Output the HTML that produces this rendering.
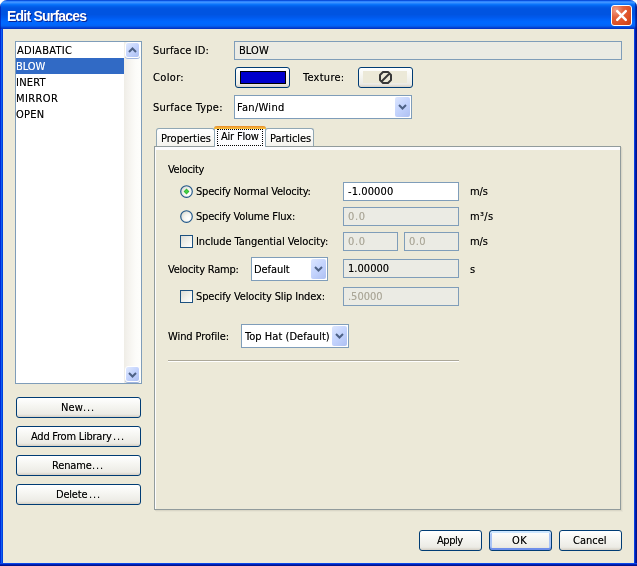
<!DOCTYPE html>
<html>
<head>
<meta charset="utf-8">
<title>Edit Surfaces</title>
<style>
html,body{margin:0;padding:0;}
body{width:637px;height:566px;overflow:hidden;background:#fff;font-family:"DejaVu Sans Condensed","Liberation Sans",sans-serif;font-size:11px;color:#000;position:relative;}
*{box-sizing:border-box;}
.abs,.t,.btn,.fld,.combo,.tab,.radio,.chk{position:absolute;}
.t{will-change:transform;white-space:nowrap;line-height:13px;height:13px;}
.k{text-shadow:0 0 0 rgba(0,0,0,0.5);}
#win{position:absolute;left:0;top:0;width:637px;height:566px;background:#ECE9D8;border-radius:7px 7px 0 0;overflow:hidden;}
#win .bl{position:absolute;left:0;top:29px;width:3px;height:537px;background:linear-gradient(90deg,#0029D8 0,#0029D8 1px,#1060F0 1px,#1060F0 2px,#0040E0 2px,#0040E0 3px);}
#win .br{position:absolute;left:634px;top:29px;width:3px;height:537px;background:linear-gradient(90deg,#0840E0 0,#0840E0 1px,#001DB0 1px,#001DB0 2px,#00138C 2px,#00138C 3px);}
#win .bb{position:absolute;left:0;top:563px;width:637px;height:3px;background:linear-gradient(180deg,#0A48E8 0,#0A48E8 1px,#0020B8 1px,#0020B8 2px,#00138C 2px,#00138C 3px);}
#title{position:absolute;left:0;top:0;width:637px;height:29px;
 background:linear-gradient(180deg,#0A50DD 0.5px,#2F84FF 1.5px,#3E93FF 2.5px,#2283FF 3.5px,#0A74FA 4.5px,#0468F2 5.5px,#035FEA 6.5px,#0259E4 7.5px,#0054E1 9px,#0054E1 14.5px,#0056E6 15.5px,#005AEE 17.5px,#0061F7 19.5px,#0067FE 21.5px,#0068FF 23.5px,#0364F6 25.5px,#0458E8 26.5px,#0446D6 27.5px,#0236C6 28.5px);}
#title:before{content:'';position:absolute;left:0;top:0;width:1px;height:29px;background:rgba(0,20,170,0.6);}
#title:after{content:'';position:absolute;right:0;top:0;width:2px;height:29px;background:linear-gradient(90deg,rgba(0,20,150,0.45),rgba(0,10,120,0.85));}
#title .cap{will-change:transform;position:absolute;left:7px;top:8px;font-family:"Liberation Sans",sans-serif;font-weight:bold;font-size:14px;line-height:16px;color:#fff;text-shadow:1px 1px 0 rgba(10,20,120,0.8);white-space:nowrap;letter-spacing:-0.78px;}
#close{position:absolute;left:611px;top:5px;width:21px;height:21px;border:1px solid #fff;border-radius:3px;
 background:radial-gradient(circle at 20% 20%,#F0A08A 0%,#E4623C 35%,#DD4E22 70%,#C63E12 100%);}
.fld{border:1px solid #7F9DB9;background:#fff;height:19px;}
.fld.dis{background:#EBEBE4;}
.g{color:#ACA899;text-shadow:0 0 0 rgba(172,168,153,0.6);}
.w{color:#fff;text-shadow:0 0 0 rgba(255,255,255,0.5);}
.btn{border:1px solid #003C74;border-radius:3px;height:21px;background:linear-gradient(180deg,#fff 0%,#F6F6F2 40%,#ECEBE5 85%,#D6D0C5 100%);}
.btn.def{box-shadow:inset 0 2px 0 #CEE7FF,inset 0 -2px 0 #6F8FEA,inset 2px 0 0 #A9C4F5,inset -2px 0 0 #A9C4F5;}
.combo{border:1px solid #7F9DB9;background:#fff;height:24px;}
.cbtn{position:absolute;right:1px;top:1px;bottom:1px;width:15px;border-radius:2px;background:linear-gradient(135deg,#DCE6FE 0%,#C3D3FD 50%,#AEC0F2 100%);}
.cbtn svg{position:absolute;left:3px;top:7px;}
.sbb{left:1px;width:15px;height:16px;border:1px solid #fff;border-radius:3px;background:linear-gradient(135deg,#E1EAFE 0%,#C3D3FD 50%,#AEC0F2 100%);box-shadow:0 1px 0 #A0B5E0;}
.radio{width:13px;height:13px;}
.chk{width:13px;height:13px;border:1px solid #1C5180;background:linear-gradient(135deg,#DCDCD6 0%,#F0F0EA 50%,#fff 100%);}
.tab{border:1px solid #91A7B4;border-bottom:none;border-radius:3px 3px 0 0;background:linear-gradient(180deg,#fff,#F4F3EE);}
</style>
</head>
<body>
<div id="win"><div id="title"><div class="cap">Edit Surfaces</div>
<div id="close"><svg width="19" height="19" viewBox="0 0 19 19" style="position:absolute;left:0;top:0"><path d="M5.2 5.2 L13.8 13.8 M13.8 5.2 L5.2 13.8" stroke="#fff" stroke-width="2.5" stroke-linecap="round"/></svg></div></div>
<div class="bl"></div><div class="br"></div><div class="bb"></div>
</div>
<div class="abs" id="list" style="left:15px;top:41px;width:127px;height:343px;border:1px solid #7F9DB9;background:#fff;"><div class="abs" style="left:0;top:16px;width:108px;height:16px;background:#316AC5;"></div><div class="t k" style="left:1px;top:2px;letter-spacing:0.27px;">ADIABATIC</div><div class="t w" style="left:0px;top:18px;letter-spacing:-0.06px;">BLOW</div><div class="t k" style="left:0px;top:34px;letter-spacing:0.22px;">INERT</div><div class="t k" style="left:0px;top:50px;letter-spacing:0.38px;">MIRROR</div><div class="t k" style="left:0px;top:66px;letter-spacing:0.24px;">OPEN</div><div class="abs" id="sb" style="left:108px;top:0;width:17px;height:341px;background:linear-gradient(90deg,#EFEDE6 0%,#F3F1EC 18%,#F8F7F3 45%,#FCFCF9 70%,#FEFEFB 100%);"><div class="abs sbb" style="top:0px;"><svg width="9" height="6" style="position:absolute;left:2px;top:4px"><path d="M1 5 L4.5 1.5 L8 5" fill="none" stroke="#4D6185" stroke-width="2"/></svg></div><div class="abs sbb" style="top:324px;"><svg width="9" height="6" style="position:absolute;left:2px;top:5px"><path d="M1 1 L4.5 4.5 L8 1" fill="none" stroke="#4D6185" stroke-width="2"/></svg></div></div></div>
<div class="btn " style="left:16px;top:397px;width:125px;height:21px;"><span class="t k" style="left:44px;top:3px;letter-spacing:0.07px;">New</span><span class="t k" style="left:66px;top:3px;letter-spacing:0.9px;">...</span></div>
<div class="btn " style="left:16px;top:426px;width:125px;height:21px;"><span class="t k" style="left:14px;top:3px;letter-spacing:-0.24px;">Add From Library</span><span class="t k" style="left:96px;top:3px;letter-spacing:0.9px;">...</span></div>
<div class="btn " style="left:16px;top:455px;width:125px;height:21px;"><span class="t k" style="left:35px;top:3px;letter-spacing:-0.16px;">Rename</span><span class="t k" style="left:75px;top:3px;letter-spacing:0.9px;">...</span></div>
<div class="btn " style="left:16px;top:484px;width:125px;height:21px;"><span class="t k" style="left:39px;top:3px;letter-spacing:-0.2px;">Delete</span><span class="t k" style="left:72px;top:3px;letter-spacing:0.9px;">...</span></div>
<div class="t k" style="left:153px;top:44px;letter-spacing:0.12px;">Surface ID:</div>
<div class="fld dis" style="left:234px;top:41px;width:388px;height:19px;"><span class="t k" style="left:4px;top:2px;letter-spacing:0.06px;">BLOW</span></div>
<div class="t k" style="left:153px;top:71px;letter-spacing:0.34px;">Color:</div>
<div class="btn " style="left:235px;top:67px;width:55px;height:21px;"><div class="abs" style="left:4px;top:3px;width:46px;height:13px;border:1px solid #000;background:#0000CC;"></div></div>
<div class="t k" style="left:303px;top:71px;letter-spacing:0.26px;">Texture:</div>
<div class="btn " style="left:358px;top:67px;width:55px;height:21px;"><div class="abs" style="left:4px;top:3px;width:44px;height:12px;background:#ECE9D8;"></div><svg width="13" height="13" viewBox="0 0 13 13" style="position:absolute;left:20px;top:3px"><path d="M4 1 L9 1 L12 4 L12 9 L9 12 L4 12 L1 9 L1 4 Z M3 10 L10 3" fill="none" stroke="#383838" stroke-width="2" stroke-linejoin="round"/></svg></div>
<div class="t k" style="left:153px;top:101px;letter-spacing:0.23px;">Surface Type:</div>
<div class="combo" style="left:234px;top:95px;width:178px;height:24px;"><span class="t k" style="left:2px;top:5px;letter-spacing:0.29px;">Fan/Wind</span><div class="cbtn"><svg width="9" height="6"><path d="M1 1 L4.5 4.5 L8 1" fill="none" stroke="#4D6185" stroke-width="2"/></svg></div></div>
<div class="abs" id="pane" style="left:154px;top:146px;width:467px;height:364px;border:1px solid #919B9C;background:#ECE9D8;box-shadow:1px 1px 0 #DAD7C7,2px 2px 0 #E6E3D3;"><div class="abs" style="left:0;top:0;width:465px;height:362px;border-top:3px solid #FCFCFE;border-left:1px solid #FCFCFE;"></div></div>
<div class="tab" style="left:156px;top:128px;width:59px;height:18px;"><span class="t k" style="left:4px;top:3px;">Properties</span></div>
<div class="tab" style="left:265px;top:128px;width:49px;height:18px;"><span class="t k" style="left:4px;top:3px;letter-spacing:-0.06px;">Particles</span></div>
<div class="tab" style="left:214px;top:126px;width:52px;height:21px;background:#FCFCFE;border-top:none;"><div class="abs" style="left:-1px;top:0;width:52px;height:3px;background:linear-gradient(180deg,#E68B2C,#FFC73C);border-radius:3px 3px 0 0;"></div><div class="abs" style="left:2px;top:3px;width:46px;height:17px;border:1px dotted #000;"></div><span class="t k" style="left:6px;top:4px;letter-spacing:-0.2px;">Air Flow</span></div>
<div class="t k" style="left:168px;top:163px;letter-spacing:-0.34px;">Velocity</div>
<svg class="radio" style="left:180px;top:185px;" width="13" height="13" viewBox="0 0 13 13"><defs><radialGradient id="rg1" cx="0.68" cy="0.68" r="0.75"><stop offset="0" stop-color="#fff"/><stop offset="0.5" stop-color="#F5F5F0"/><stop offset="1" stop-color="#D8D8D0"/></radialGradient></defs><circle cx="6.5" cy="6.5" r="5.8" fill="url(#rg1)" stroke="#21578A" stroke-width="1.15"/><path d="M6.5 3.6 L9.4 6.5 L6.5 9.4 L3.6 6.5 Z" fill="#2FB52F"/><path d="M6.5 4.6 L8.4 6.5 L6.5 8.4 L4.6 6.5 Z" fill="#45CF45"/></svg>
<div class="t k" style="left:196px;top:185px;letter-spacing:-0.19px;">Specify Normal Velocity:</div>
<div class="fld " style="left:343px;top:182px;width:116px;height:19px;"><span class="t k" style="left:4px;top:2px;letter-spacing:0.1px;">-1.00000</span></div>
<div class="t k" style="left:470px;top:185px;letter-spacing:-0.09px;">m/s</div>
<svg class="radio" style="left:180px;top:210px;" width="13" height="13" viewBox="0 0 13 13"><defs><radialGradient id="rg2" cx="0.68" cy="0.68" r="0.75"><stop offset="0" stop-color="#fff"/><stop offset="0.5" stop-color="#F5F5F0"/><stop offset="1" stop-color="#D8D8D0"/></radialGradient></defs><circle cx="6.5" cy="6.5" r="5.8" fill="url(#rg2)" stroke="#21578A" stroke-width="1.15"/></svg>
<div class="t k" style="left:196px;top:210px;letter-spacing:-0.19px;">Specify Volume Flux:</div>
<div class="fld dis" style="left:343px;top:207px;width:116px;height:19px;"><span class="t g" style="left:4px;top:2px;letter-spacing:0.65px;">0.0</span></div>
<div class="t k" style="left:470px;top:210px;letter-spacing:0.36px;">m³/s</div>
<div class="chk" style="left:180px;top:235px;"></div>
<div class="t k" style="left:196px;top:235px;letter-spacing:-0.07px;">Include Tangential Velocity:</div>
<div class="fld dis" style="left:343px;top:232px;width:55px;height:19px;"><span class="t g" style="left:4px;top:2px;letter-spacing:0.65px;">0.0</span></div>
<div class="fld dis" style="left:404px;top:232px;width:55px;height:19px;"><span class="t g" style="left:4px;top:2px;letter-spacing:0.36px;">0.0</span></div>
<div class="t k" style="left:470px;top:235px;letter-spacing:-0.09px;">m/s</div>
<div class="t k" style="left:168px;top:263px;letter-spacing:-0.23px;">Velocity Ramp:</div>
<div class="combo" style="left:251px;top:257px;width:77px;height:24px;"><span class="t k" style="left:2px;top:5px;letter-spacing:-0.07px;">Default</span><div class="cbtn"><svg width="9" height="6"><path d="M1 1 L4.5 4.5 L8 1" fill="none" stroke="#4D6185" stroke-width="2"/></svg></div></div>
<div class="fld dis" style="left:343px;top:259px;width:116px;height:19px;"><span class="t k" style="left:4px;top:2px;letter-spacing:0.04px;">1.00000</span></div>
<div class="t k" style="left:470px;top:263px;">s</div>
<div class="chk" style="left:180px;top:290px;"></div>
<div class="t k" style="left:196px;top:290px;letter-spacing:-0.14px;">Specify Velocity Slip Index:</div>
<div class="fld dis" style="left:343px;top:287px;width:116px;height:19px;"><span class="t g" style="left:4px;top:2px;letter-spacing:-0.02px;">.50000</span></div>
<div class="t k" style="left:168px;top:330px;letter-spacing:-0.08px;">Wind Profile:</div>
<div class="combo" style="left:241px;top:324px;width:108px;height:24px;"><span class="t k" style="left:3px;top:5px;letter-spacing:0.04px;">Top Hat (Default)</span><div class="cbtn"><svg width="9" height="6"><path d="M1 1 L4.5 4.5 L8 1" fill="none" stroke="#4D6185" stroke-width="2"/></svg></div></div>
<div class="abs" style="left:168px;top:360px;width:291px;height:2px;border-top:1px solid #ACA899;border-bottom:1px solid #fff;"></div>
<div class="btn " style="left:419px;top:530px;width:63px;height:21px;"><span class="t k" style="left:17px;top:3px;letter-spacing:-0.44px;">Apply</span></div>
<div class="btn def" style="left:489px;top:530px;width:63px;height:21px;"><span class="t k" style="left:22px;top:3px;letter-spacing:0.54px;">OK</span></div>
<div class="btn " style="left:559px;top:530px;width:63px;height:21px;"><span class="t k" style="left:13px;top:3px;">Cancel</span></div>
</body>
</html>
